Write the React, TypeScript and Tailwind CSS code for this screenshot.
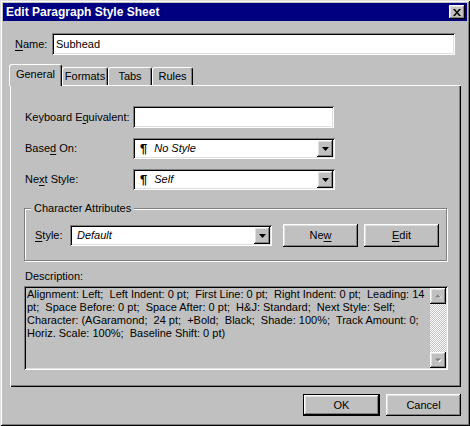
import React from "react";

const raised =
  "shadow-[inset_-1px_-1px_#000,inset_1px_1px_#fff,inset_-2px_-2px_#808080,inset_2px_2px_#dfdfdf]";
const sunken =
  "shadow-[inset_1px_1px_#808080,inset_-1px_-1px_#fff,inset_2px_2px_#000,inset_-2px_-2px_#dfdfdf]";

// underline one accelerator letter, like the Win95 labels do
const Acc = ({ children }: { children: React.ReactNode }) => (
  <span className="underline underline-offset-[2px]">{children}</span>
);

const DownArrow = ({ color = "#000" }: { color?: string }) => (
  <svg width="7" height="4" viewBox="0 0 7 4">
    <path d="M0 0h7L3.5 4z" fill={color} />
  </svg>
);

interface ComboProps {
  text: string;
  pilcrow?: boolean;
  className?: string;
}

const Combo: React.FC<ComboProps> = ({ text, pilcrow = false, className = "" }) => (
  <div className={`flex h-[21px] bg-white p-[2px] ${sunken} ${className}`}>
    <div className="flex flex-1 items-center gap-[7px] pl-[5px]">
      {pilcrow && <span className="text-[13px] font-bold leading-none">¶</span>}
      <span className="italic">{text}</span>
    </div>
    <div className={`flex w-[16px] items-center justify-center bg-[#c0c0c0] ${raised}`}>
      <DownArrow />
    </div>
  </div>
);

const Button: React.FC<{ children: React.ReactNode; className?: string }> = ({
  children,
  className = "",
}) => (
  <div className={`flex w-[75px] items-center justify-center bg-[#c0c0c0] ${raised} ${className}`}>
    {children}
  </div>
);

const lines = [
  "Alignment: Left;  Left Indent: 0 pt;  First Line: 0 pt;  Right Indent: 0 pt;  Leading: 14",
  "pt;  Space Before: 0 pt;  Space After: 0 pt;  H&J: Standard;  Next Style: Self;",
  "Character: (AGaramond;  24 pt;  +Bold;  Black;  Shade: 100%;  Track Amount: 0;",
  "Horiz. Scale: 100%;  Baseline Shift: 0 pt)",
];

const tabs = [
  { label: "General", w: "w-[53px]" },
  { label: "Formats", w: "w-[46px]" },
  { label: "Tabs", w: "w-[44px]" },
  { label: "Rules", w: "w-[41px]" },
];

export default function App() {
  return (
    <div
      className={`flex h-[426px] w-[470px] flex-col bg-[#c0c0c0] p-[3px] font-['Liberation_Sans',Arial,sans-serif] text-[11px] leading-[13px] text-black shadow-[inset_1px_1px_#dfdfdf,inset_-1px_-1px_#000,inset_2px_2px_#fff,inset_-2px_-2px_#808080]`}
    >
      {/* Title bar */}
      <div className="flex h-[18px] items-center justify-between bg-[#000080] pl-[3px] pr-[2px]">
        <span className="text-[12px] font-bold text-white">Edit Paragraph Style Sheet</span>
        <div className={`flex h-[14px] w-[16px] items-center justify-center bg-[#c0c0c0] ${raised}`}>
          <svg width="8" height="7" viewBox="0 0 8 7">
            <path d="M0 0h2l2 2.5L6 0h2L5 3.5 8 7H6L4 4.5 2 7H0l3-3.5z" fill="#000" />
          </svg>
        </div>
      </div>

      {/* Name */}
      <div className="mt-[12px] flex h-[22px] items-center pl-[12px]">
        <span className="w-[37px]">
          <Acc>N</Acc>ame:
        </span>
        <div className={`flex h-[22px] w-[403px] items-center bg-white pl-[4px] ${sunken}`}>
          Subhead
        </div>
      </div>

      {/* Tabs */}
      <div className="relative z-10 mt-[9px] flex h-[21px] items-end pl-[6px]">
        {tabs.map((t, i) => (
          <div
            key={t.label}
            className={`flex items-center justify-center rounded-t-[3px] border-l border-t border-r border-white border-r-black bg-[#c0c0c0] shadow-[inset_-1px_0_#808080] ${t.w} ${
              i === 0 ? "-mb-[1px] h-[22px] pb-[2px]" : "h-[18px]"
            }`}
          >
            {t.label}
          </div>
        ))}
      </div>

      {/* Tab panel */}
      <div
        className={`ml-[7px] flex h-[302px] w-[451px] flex-col pl-[15px] pt-[21px] shadow-[inset_1px_1px_#fff,inset_-1px_-1px_#000,inset_-2px_-2px_#808080]`}
      >
        <div className="flex h-[22px] items-center">
          <span className="w-[108px]">
            Keyboard E<Acc>q</Acc>uivalent:
          </span>
          <div className={`h-[22px] w-[201px] bg-white ${sunken}`} />
        </div>

        <div className="mt-[10px] flex h-[21px] items-center">
          <span className="w-[108px]">
            Base<Acc>d</Acc> On:
          </span>
          <Combo text="No Style" pilcrow className="w-[202px]" />
        </div>

        <div className="mt-[10px] flex h-[21px] items-center">
          <span className="w-[108px]">
            Ne<Acc>x</Acc>t Style:
          </span>
          <Combo text="Self" pilcrow className="w-[202px]" />
        </div>

        <fieldset className="-ml-[1px] mt-[12px] h-[59px] w-[423px] border border-[#808080] shadow-[1px_1px_#fff,inset_1px_1px_#fff]">
          <legend className="ml-[6px] bg-[#c0c0c0] px-[3px]">Character Attributes</legend>
          <div className="mt-[9px] flex h-[23px] items-center pl-[10px]">
            <span className="w-[35px]">
              <Acc>S</Acc>tyle:
            </span>
            <Combo text="Default" className="w-[202px]" />
            <Button className="ml-[11px] h-[23px]">
              Ne<Acc>w</Acc>
            </Button>
            <Button className="ml-[6px] h-[23px]">
              <Acc>E</Acc>dit
            </Button>
          </div>
        </fieldset>

        <div className="mt-[9px] h-[13px]">Description:</div>
        <div className={`-ml-[1px] mt-[3px] flex h-[84px] w-[424px] p-[2px] ${sunken}`}>
          <div className="flex-1 pl-[1px]">
            {lines.map((l) => (
              <div key={l} className="whitespace-pre">
                {l}
              </div>
            ))}
          </div>
          <div className="flex w-[16px] flex-col">
            <div className={`flex h-[16px] items-center justify-center bg-[#c0c0c0] ${raised}`}>
              <svg width="7" height="5" viewBox="0 0 7 5">
                <path d="M1 4h6L4 1z" fill="#fff" />
                <path d="M0 3.5h6L3 0.5z" fill="#808080" />
              </svg>
            </div>
            <div className="flex-1 bg-[image:repeating-conic-gradient(#c0c0c0_0%_25%,#fff_0%_50%)] bg-[length:2px_2px]" />
            <div className={`flex h-[16px] items-center justify-center bg-[#c0c0c0] ${raised}`}>
              <svg width="7" height="5" viewBox="0 0 7 5">
                <path d="M1 1.5h6L4 4.5z" fill="#fff" />
                <path d="M0 0.5h6L3 3.5z" fill="#808080" />
              </svg>
            </div>
          </div>
        </div>
      </div>

      {/* Dialog buttons */}
      <div className="mt-[7px] flex justify-end gap-[6px] pr-[6px]">
        <div className="h-[22px] border border-black">
          <Button className="h-full w-[73px]">OK</Button>
        </div>
        <Button className="h-[22px]">Cancel</Button>
      </div>
    </div>
  );
}
